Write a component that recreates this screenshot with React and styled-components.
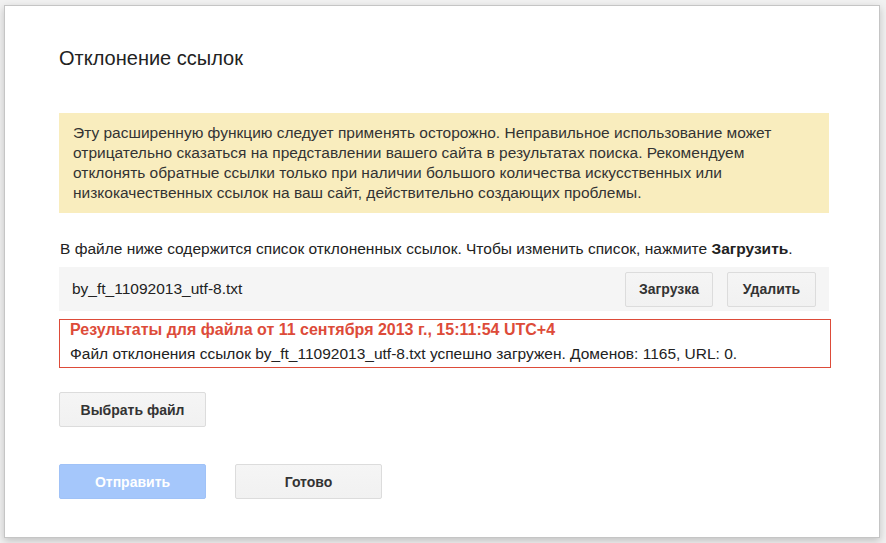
import styled, { createGlobalStyle } from 'styled-components'

const GlobalStyle = createGlobalStyle`
  html, body {
    margin: 0;
    padding: 0;
    background: #f1f1f1;
    font-family: "Liberation Sans", Arial, sans-serif;
    color: #333;
  }
`

const Page = styled.div`
  width: 886px;
  height: 543px;
  padding: 5px 0 0 4px;
  box-sizing: border-box;
  overflow: hidden;
`

const Dialog = styled.div`
  width: 876px;
  height: 533px;
  box-sizing: border-box;
  background: #fff;
  border: 1px solid #c5c5c5;
  box-shadow: 0 3px 8px rgba(0, 0, 0, 0.2);
  padding: 40px 50px 0 54px;
`

const Title = styled.h2`
  margin: 0 0 43px;
  font-size: 20px;
  line-height: 24px;
  font-weight: 400;
  color: #222;
`

const Warning = styled.div`
  background: #f9edbe;
  padding: 10px 14px;
  font-size: 15.5px;
  line-height: 20px;
  color: #333;
`

const Intro = styled.p`
  margin: 26px 0 8px 1px;
  font-size: 15.5px;
  line-height: 20px;
  color: #222;
`

const FileRow = styled.div`
  display: flex;
  align-items: center;
  gap: 14px;
  height: 44px;
  background: #f5f5f5;
  padding: 0 13px;
`

const FileName = styled.span`
  flex: 1;
  font-size: 15.5px;
  color: #222;
`

const Button = styled.button`
  height: 35px;
  width: ${(p) => p.$w || 147}px;
  box-sizing: border-box;
  border: 1px solid ${(p) => (p.$primary ? '#a0c2f7' : '#dcdcdc')};
  border-radius: 2px;
  background: ${(p) => (p.$primary ? '#a5c7fb' : 'linear-gradient(#f5f5f5, #f1f1f1)')};
  color: ${(p) => (p.$primary ? '#fff' : '#333')};
  font-family: inherit;
  font-size: 14px;
  font-weight: 700;
  padding: 0;
  cursor: default;
`

const Result = styled.div`
  margin-top: 8px;
  margin-right: -2px;
  border: 1px solid #dd4b39;
  padding: 0 10px 3px;
`

const ResultTitle = styled.div`
  color: #dd4b39;
  font-weight: 700;
  font-size: 16px;
  line-height: 20px;
  margin-bottom: 4px;
`

const ResultText = styled.div`
  font-size: 15.5px;
  line-height: 20px;
  color: #222;
`

const ChooseRow = styled.div`
  margin-top: 24px;
`

const Footer = styled.div`
  display: flex;
  gap: 29px;
  margin-top: 37px;
`

export default function App() {
  return (
    <>
      <GlobalStyle />
      <Page>
        <Dialog>
          <Title>Отклонение ссылок</Title>
          <Warning>
            Эту расширенную функцию следует применять осторожно. Неправильное использование может
            отрицательно сказаться на представлении вашего сайта в результатах поиска. Рекомендуем
            отклонять обратные ссылки только при наличии большого количества искусственных или
            низкокачественных ссылок на ваш сайт, действительно создающих проблемы.
          </Warning>
          <Intro>
            В файле ниже содержится список отклоненных ссылок. Чтобы изменить список, нажмите <b>Загрузить</b>.
          </Intro>
          <FileRow>
            <FileName>by_ft_11092013_utf-8.txt</FileName>
            <Button $w={88}>Загрузка</Button>
            <Button $w={89}>Удалить</Button>
          </FileRow>
          <Result>
            <ResultTitle>Результаты для файла от 11 сентября 2013 г., 15:11:54 UTC+4</ResultTitle>
            <ResultText>
              Файл отклонения ссылок by_ft_11092013_utf-8.txt успешно загружен. Доменов: 1165, URL: 0.
            </ResultText>
          </Result>
          <ChooseRow>
            <Button>Выбрать файл</Button>
          </ChooseRow>
          <Footer>
            <Button $primary>Отправить</Button>
            <Button>Готово</Button>
          </Footer>
        </Dialog>
      </Page>
    </>
  )
}
